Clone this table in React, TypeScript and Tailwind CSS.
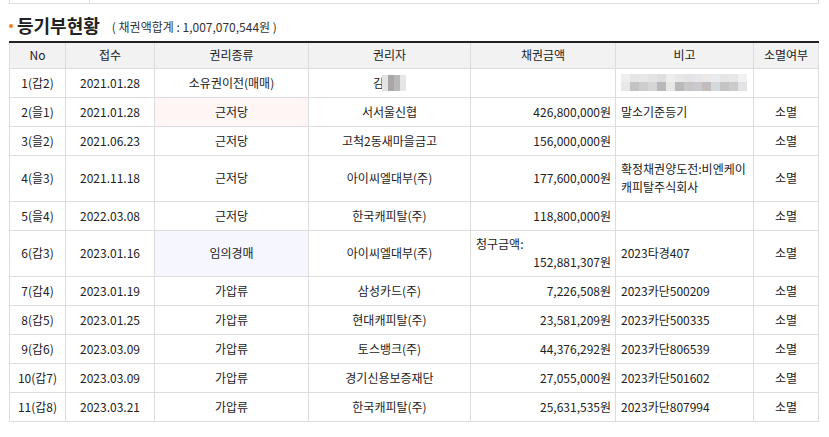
import React from 'react';

type Row = {
  no: string;
  date: string;
  kind: string;
  holder: React.ReactNode;
  amount: React.ReactNode;
  note: React.ReactNode;
  gone: string;
  tall?: boolean;
  kindBg?: string;
};

const Blur: React.FC<{ shades: string[]; className?: string }> = ({ shades, className }) => (
  <span className={'inline-flex align-middle ' + (className ?? '')}>
    {shades.map((c, i) => (
      <span key={i} className="inline-block w-[6px] h-[16px]" style={{ background: c }} />
    ))}
  </span>
);

const noteBlur = (
  <div className="flex flex-col">
    <div className="flex h-[8px]">
      {['#eeeeee', '#e6e4e4', '#e7e7e9', '#e3e3e3', '#dedee0', '#eceeec', '#e8e8ea', '#e4e4e6', '#e6e6e8', '#ebe9e7', '#e9ebed', '#e5e5e5', '#e7e7e7', '#f1f1f3'].map((c, i) => (
        <span key={i} className="w-[9px] h-full" style={{ background: c }} />
      ))}
    </div>
    <div className="flex h-[9px]">
      {['#e8e8e8', '#c3c3c3', '#cdcdcd', '#d5d5d5', '#b9b7bb', '#e7e7e5', '#b9b9bb', '#c7c7c7', '#cbc9cf', '#c4bcbc', '#d3d9dd', '#c3c3c1', '#cbcbcb', '#e3e3e5'].map((c, i) => (
        <span key={i} className="w-[9px] h-full" style={{ background: c }} />
      ))}
    </div>
  </div>
);

const rows: Row[] = [
  {
    no: '1(갑2)',
    date: '2021.01.28',
    kind: '소유권이전(매매)',
    holder: (
      <span className="inline-flex items-center">
        김<Blur shades={['#e3e3e3', '#a9a5a9', '#b8b8b8', '#e6e6e6']} className="-ml-[2px]" />
      </span>
    ),
    amount: '',
    note: noteBlur,
    gone: '',
  },
  { no: '2(을1)', date: '2021.01.28', kind: '근저당', holder: '서서울신협', amount: '426,800,000원', note: '말소기준등기', gone: '소멸', kindBg: 'bg-[#fff5f5]' },
  { no: '3(을2)', date: '2021.06.23', kind: '근저당', holder: '고척2동새마을금고', amount: '156,000,000원', note: '', gone: '소멸' },
  {
    no: '4(을3)',
    date: '2021.11.18',
    kind: '근저당',
    holder: '아이씨엘대부(주)',
    amount: '177,600,000원',
    note: (
      <>
        확정채권양도전:비엔케이
        <br />
        캐피탈주식회사
      </>
    ),
    gone: '소멸',
    tall: true,
  },
  { no: '5(을4)', date: '2022.03.08', kind: '근저당', holder: '한국캐피탈(주)', amount: '118,800,000원', note: '', gone: '소멸' },
  {
    no: '6(갑3)',
    date: '2023.01.16',
    kind: '임의경매',
    holder: '아이씨엘대부(주)',
    amount: (
      <div className="flex flex-col">
        <span className="text-left pl-[1px]">청구금액:</span>
        <span>152,881,307원</span>
      </div>
    ),
    note: '2023타경407',
    gone: '소멸',
    tall: true,
    kindBg: 'bg-[#f5f6fe]',
  },
  { no: '7(갑4)', date: '2023.01.19', kind: '가압류', holder: '삼성카드(주)', amount: '7,226,508원', note: '2023카단500209', gone: '소멸' },
  { no: '8(갑5)', date: '2023.01.25', kind: '가압류', holder: '현대캐피탈(주)', amount: '23,581,209원', note: '2023카단500335', gone: '소멸' },
  { no: '9(갑6)', date: '2023.03.09', kind: '가압류', holder: '토스뱅크(주)', amount: '44,376,292원', note: '2023카단806539', gone: '소멸' },
  { no: '10(갑7)', date: '2023.03.09', kind: '가압류', holder: '경기신용보증재단', amount: '27,055,000원', note: '2023카단501602', gone: '소멸' },
  { no: '11(갑8)', date: '2023.03.21', kind: '가압류', holder: '한국캐피탈(주)', amount: '25,631,535원', note: '2023카단807994', gone: '소멸' },
];

const headers = ['No', '접수', '권리종류', '권리자', '채권금액', '비고', '소멸여부'];
const widths = ['w-[56px]', 'w-[89px]', 'w-[154px]', 'w-[162px]', 'w-[145px]', 'w-[138px]', 'w-[65px]'];

export default function App() {
  return (
    <div
      className="w-[829px] h-[437px] bg-white text-[#222] text-[12px] overflow-hidden"
      style={{ fontFamily: '"Noto Sans CJK KR", "Noto Sans", sans-serif' }}
    >
      <div className="mx-[9px] w-[810px] h-[4px] border-x border-b border-[#dddddd] flex">
        <div className="w-[80px] border-r border-[#dddddd]" />
      </div>

      <div className="flex items-end h-[37px] pb-[4px] pl-[9px]">
        <span className="w-[4px] h-[4px] rounded-full bg-[#f47a20] mb-[9px] mr-[4px]" />
        <span className="text-[18px] font-bold leading-[24px] text-[#222]">등기부현황</span>
        <span className="ml-[12px] mb-[2px] text-[12px] leading-[16px] text-[#333]">( 채권액합계 : 1,007,070,544원 )</span>
      </div>

      <table className="ml-[9px] w-[810px] border-collapse table-fixed border-t-2 border-t-[#222]">
        <thead>
          <tr className="h-[26px] bg-[#f2f2f2]">
            {headers.map((h, i) => (
              <th key={h} className={widths[i] + ' font-normal border border-[#dddddd] border-t-0 leading-[16px] p-0'}>
                {h}
              </th>
            ))}
          </tr>
        </thead>
        <tbody>
          {rows.map((r) => (
            <tr key={r.no} className={r.tall ? 'h-[46px]' : 'h-[29px]'}>
              <td className="border border-[#dddddd] text-center p-0 leading-[16px]">{r.no}</td>
              <td className="border border-[#dddddd] text-center p-0 leading-[16px]">{r.date}</td>
              <td className={'border border-[#dddddd] text-center p-0 leading-[16px] ' + (r.kindBg ?? '')}>{r.kind}</td>
              <td className="border border-[#dddddd] text-center p-0 leading-[16px]">{r.holder}</td>
              <td className="border border-[#dddddd] text-right pr-[4px] pl-[4px] py-0 leading-[18px]">{r.amount}</td>
              <td className="border border-[#dddddd] text-left pl-[5px] py-0 leading-[18px]">{r.note}</td>
              <td className="border border-[#dddddd] text-center p-0 leading-[16px]">{r.gone}</td>
            </tr>
          ))}
        </tbody>
      </table>
    </div>
  );
}
